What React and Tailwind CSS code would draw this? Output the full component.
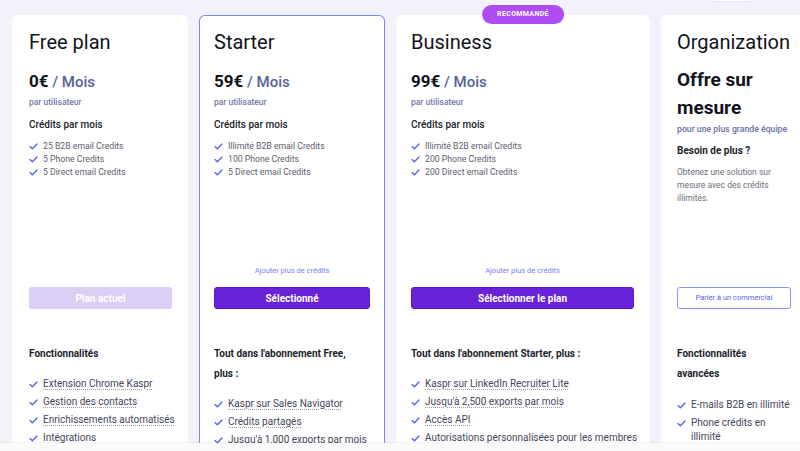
const CHECK = (
  <svg width="9" height="7" viewBox="0 0 9 7" fill="none" className="shrink-0">
    <path d="M1 3.6 L3.4 5.8 L8 1" stroke="#4f5ff0" strokeWidth="1.3" strokeLinecap="round" strokeLinejoin="round" />
  </svg>
);

const PLANS = [
  {
    id: 'free',
    title: 'Free plan',
    price: '0€',
    credits: ['25 B2B email Credits', '5 Phone Credits', '5 Direct email Credits'],
    addLink: false,
    button: 'Plan actuel',
    buttonStyle: 'current',
    heading: ['Fonctionnalités'],
    features: ['Extension Chrome Kaspr', 'Gestion des contacts', 'Enrichissements automatisés', 'Intégrations'],
    box: 'w-[176px] pl-[17px] pr-[16px]',
  },
  {
    id: 'starter',
    title: 'Starter',
    price: '59€',
    credits: ['Illimité B2B email Credits', '100 Phone Credits', '5 Direct email Credits'],
    addLink: true,
    button: 'Sélectionné',
    buttonStyle: 'solid',
    heading: ["Tout dans l'abonnement Free,", 'plus :'],
    features: ['Kaspr sur Sales Navigator', 'Crédits partagés', "Jusqu'à 1,000 exports par mois"],
    box: 'w-[186px] px-[15px] ring-1 ring-inset ring-[#7b86f4]',
  },
  {
    id: 'business',
    title: 'Business',
    price: '99€',
    credits: ['Illimité B2B email Credits', '200 Phone Credits', '200 Direct email Credits'],
    addLink: true,
    button: 'Sélectionner le plan',
    buttonStyle: 'solid',
    heading: ["Tout dans l'abonnement Starter, plus :"],
    features: ['Kaspr sur LinkedIn Recruiter Lite', "Jusqu'à 2,500 exports par mois", 'Accès API', 'Autorisations personnalisées pour les membres'],
    box: 'w-[254px] px-[15px] pr-[16px]',
    badge: 'Recommandé',
  },
];

function Button({ label, kind }) {
  if (kind === 'current') {
    return (
      <div className="h-[22px] rounded-[3px] bg-[#dccff5] flex items-center justify-center text-white text-[10px] font-bold">
        {label}
      </div>
    );
  }
  if (kind === 'outline') {
    return (
      <div className="h-[22px] rounded-[3px] border border-[#8e94f5] bg-white flex items-center justify-center text-[#5b5ff0] text-[7.5px]">
        {label}
      </div>
    );
  }
  return (
    <div className="h-[22px] rounded-[3px] bg-[#6a22d8] border border-[#5a18c0] flex items-center justify-center text-white text-[10px] font-bold">
      {label}
    </div>
  );
}

function Features({ heading, features }) {
  return (
    <div className="mt-[35px]">
      {heading.map(h => (
        <div key={h} className="text-[10px] font-bold leading-[20px] text-[#1b1d2b] whitespace-nowrap">{h}</div>
      ))}
      <ul className="mt-[11px]">
        {features.map(f => (
          <li key={f} className="flex items-start gap-[5px] leading-[18px] text-[10px] text-[#45465a] whitespace-nowrap">
            <span className="mt-[6px]">{CHECK}</span>
            <span className="underline decoration-dotted decoration-[#9a9aa8] underline-offset-2">{f}</span>
          </li>
        ))}
      </ul>
    </div>
  );
}

function PlanCard({ plan }) {
  return (
    <div className={`relative shrink-0 ${plan.box} h-[460px] rounded-[6px] bg-white`}>
      {plan.badge && (
        <div className="absolute left-1/2 -translate-x-1/2 -top-[10px] h-[19px] px-[15px] rounded-full bg-[#ad4cf3] flex items-center text-white text-[7px] font-bold tracking-[0.05em] uppercase">
          {plan.badge}
        </div>
      )}
      <div className="h-[248px] pt-[13px]">
        <div className="text-[20px] leading-[28px] text-[#12131c]">{plan.title}</div>
        <div className="mt-[13px] leading-[24px]">
          <span className="text-[17px] font-bold text-[#12131c]">{plan.price}</span>
          <span className="text-[15px] font-medium text-[#5a5f9b]"> / Mois</span>
        </div>
        <div className="mt-[1px] text-[8.5px] leading-[14px] font-medium text-[#7477a8]">par utilisateur</div>
        <div className="mt-[8px] text-[10px] leading-[16px] font-medium text-[#1b1d2b]">Crédits par mois</div>
        <ul className="mt-[7px]">
          {plan.credits.map(c => (
            <li key={c} className="flex items-center gap-[5px] leading-[13px] text-[8.7px] text-[#5d5e6c] whitespace-nowrap">
              {CHECK}
              <span>{c}</span>
            </li>
          ))}
        </ul>
      </div>
      <div className="h-[16px] flex items-center justify-center text-[7.5px] text-[#7b80f3]">
        {plan.addLink ? 'Ajouter plus de crédits' : ''}
      </div>
      <div className="mt-[8px]">
        <Button label={plan.button} kind={plan.buttonStyle} />
      </div>
      <Features heading={plan.heading} features={plan.features} />
    </div>
  );
}

function OrgCard() {
  return (
    <div className="relative shrink-0 w-[254px] h-[460px] rounded-[6px] bg-white px-[16px]">
      <div className="h-[248px] pt-[13px]">
        <div className="text-[20px] leading-[28px] text-[#12131c]">Organization</div>
        <div className="mt-[10px] text-[19px] leading-[28px] font-bold text-[#12131c]">
          Offre sur<br />mesure
        </div>
        <div className="text-[8.7px] leading-[14px] font-medium text-[#6b6fa6] whitespace-nowrap">pour une plus grande équipe</div>
        <div className="mt-[7px] text-[10px] leading-[16px] font-bold text-[#1b1d2b]">Besoin de plus ?</div>
        <p className="mt-[7px] w-[112px] text-[8.5px] leading-[13px] text-[#6d6e7a]">
          Obtenez une solution sur mesure avec des crédits illimités.
        </p>
      </div>
      <div className="h-[16px]" />
      <div className="mt-[8px] w-[114px]">
        <Button label="Parler à un commercial" kind="outline" />
      </div>
      <div className="mt-[35px]">
        <div className="text-[10px] font-bold leading-[20px] text-[#1b1d2b]">Fonctionnalités</div>
        <div className="text-[10px] font-bold leading-[20px] text-[#1b1d2b]">avancées</div>
        <ul className="mt-[14px] w-[114px]">
          {['E-mails B2B en illimité', 'Phone crédits en illimité'].map(f => (
            <li key={f} className="flex items-start gap-[5px] leading-[14px] mb-[4px] text-[10px] text-[#45465a]">
              <span className="mt-[4px]">{CHECK}</span>
              <span>{f}</span>
            </li>
          ))}
        </ul>
      </div>
    </div>
  );
}

export default function App() {
  return (
    <div
      className="relative w-[800px] h-[451px] overflow-hidden bg-[#f3f2fa]"
      style={{ fontFamily: 'Roboto, "Noto Sans", sans-serif' }}
    >
      <div className="absolute left-[712px] -top-[6px] w-[40px] h-[8px] rounded-[4px] bg-white border border-[#e6e6f2]" />
      <div className="flex gap-[11px] pl-[12px] pt-[15px]">
        {PLANS.map(plan => (
          <PlanCard key={plan.id} plan={plan} />
        ))}
        <OrgCard />
      </div>
      <div className="absolute left-0 right-0 bottom-0 h-[8px] bg-[#fafafb] shadow-[0_-1px_2px_rgba(0,0,0,0.06)]" />
    </div>
  );
}
